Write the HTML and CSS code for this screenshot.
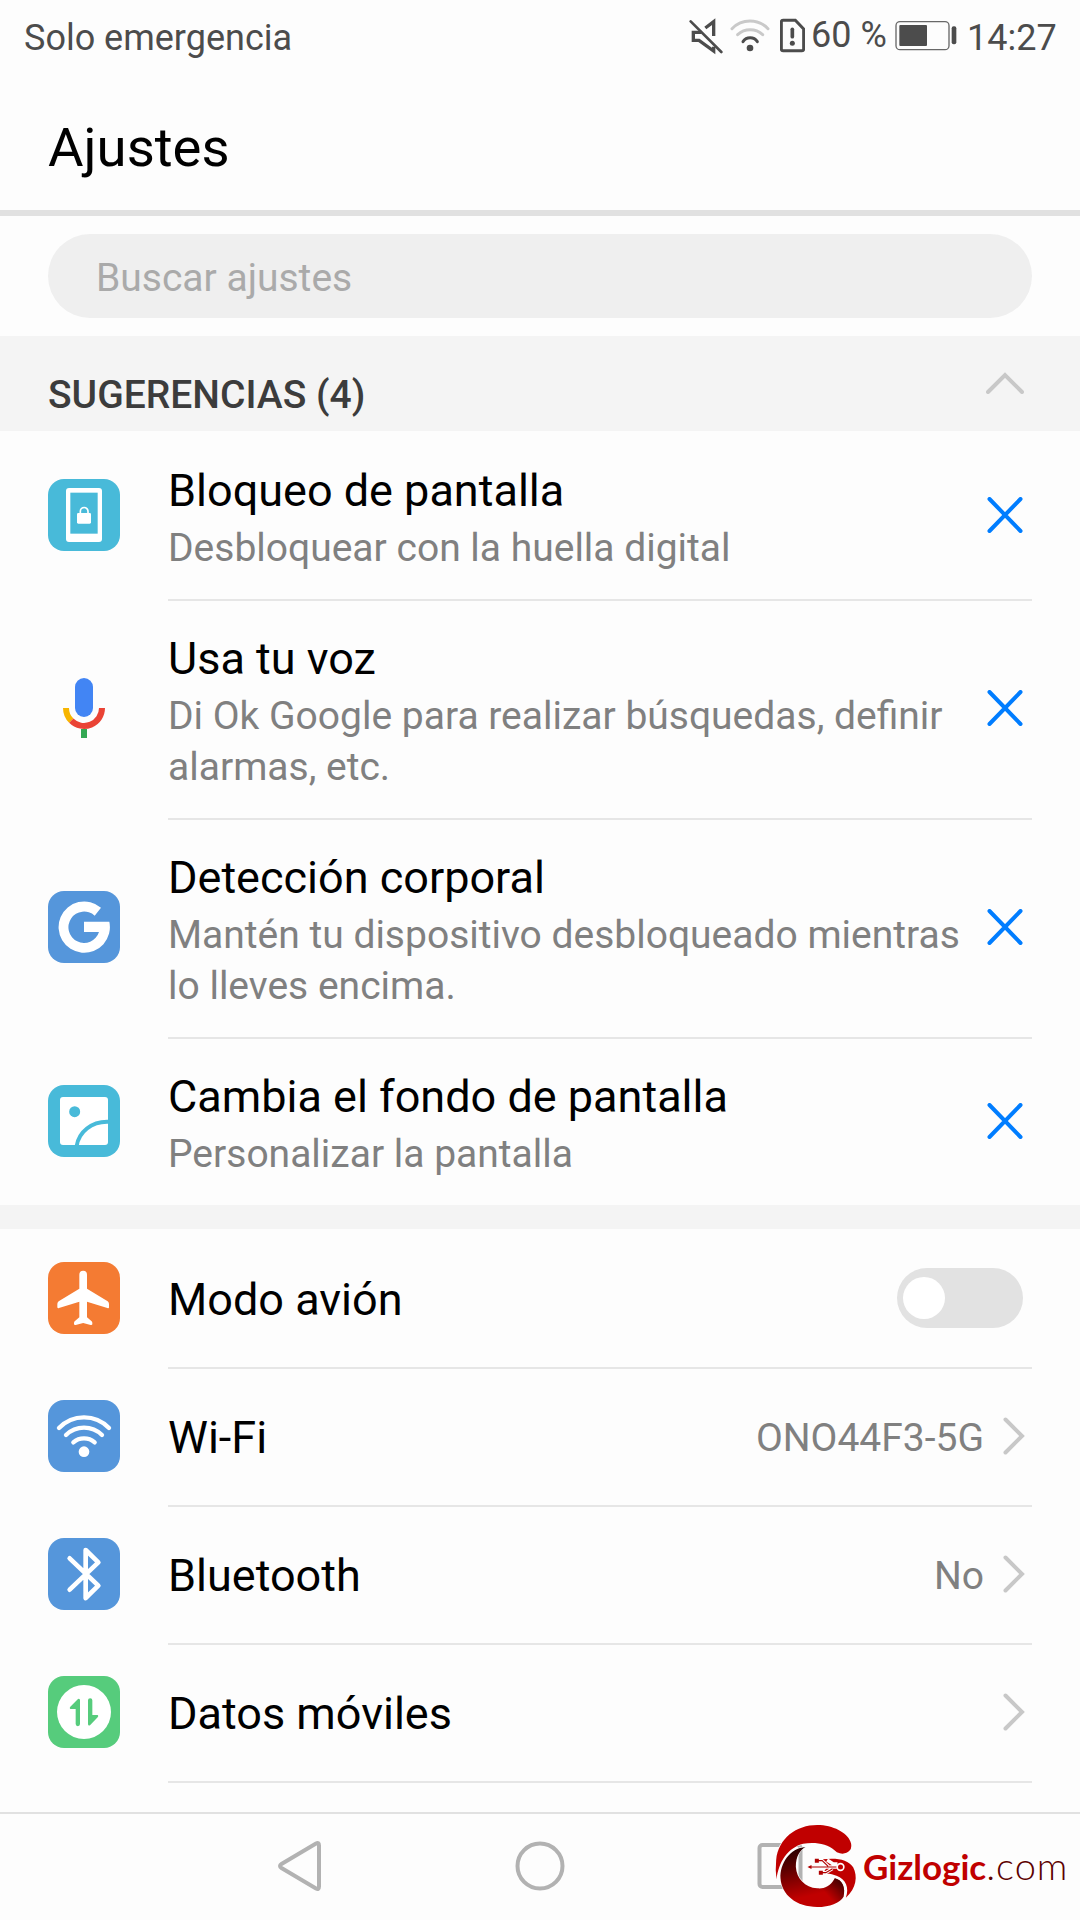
FILE: index.html
```
<!DOCTYPE html>
<html lang="es">
<head>
  <meta charset="UTF-8">
  <meta name="viewport" content="width=device-width, initial-scale=1.0">
  <title>Ajustes</title>
  <link rel="stylesheet" href="styles.css">
</head>
<body>
  <div class="status-bar">
    <span class="carrier">Solo emergencia</span>
    <svg class="status-mute" viewBox="87 48 102 120" fill="none" stroke="#4c4c4c" stroke-width="10">
      <path d="M136 84L161 65V108M124 97H100V121H117L161 153V140"/>
      <path d="M92 64L184 156" stroke-linecap="round" stroke-width="8"/>
    </svg>
    <svg class="status-wifi" viewBox="210 48 120 120" fill="none" stroke-width="9" stroke-linecap="round">
      <path d="M216 86A75 75 0 0 1 324 86M233 104A56 56 0 0 1 308 104" stroke="#c9c9c9"/>
      <path d="M249 125A26 26 0 0 1 292 125" stroke="#4c4c4c"/>
      <circle cx="270" cy="144" r="10" fill="#4c4c4c"/>
    </svg>
    <svg class="status-sim" viewBox="360 48 75 120" fill="none" stroke="#4c4c4c" stroke-width="9">
      <path d="M369 61H406L431 87V147Q431 152 426 152H369Q364 152 364 147V66Q364 61 369 61Z"/>
      <path d="M397 88V110" stroke-width="11" stroke-linecap="round"/>
      <circle cx="397" cy="130" r="7.5" fill="#4c4c4c" stroke="none"/>
    </svg>
    <span class="battery-level">60 %</span>
    <svg class="status-battery" viewBox="706 48 186 120">
      <rect x="709" y="65" width="159" height="84" rx="12" fill="none" stroke="#686868" stroke-width="4"/>
      <rect x="719" y="75" width="83" height="63" rx="3" fill="#4c4c4c"/>
      <rect x="876" y="79" width="14" height="54" rx="6" fill="#4c4c4c"/>
    </svg>
    <span class="clock">14:27</span>
  </div>

  <header class="header">
    <h1>Ajustes</h1>
  </header>

  <div class="search">
    <div class="search-field">Buscar ajustes</div>
  </div>

  <div class="section-title">
    <h2>SUGERENCIAS (4)</h2>
    <svg class="collapse" viewBox="0 0 38 22"><path d="M2 20L19 3L36 20"/></svg>
  </div>

  <div class="suggestions">
    <div class="row tip">
      <svg class="icon" viewBox="0 0 216 216">
        <rect width="216" height="216" rx="48" fill="#48bad9"/>
        <rect x="54" y="27" width="108" height="162" rx="9" fill="#fff"/>
        <rect x="67" y="41" width="82" height="123" fill="#48bad9"/>
        <rect x="87" y="102" width="42" height="32" rx="4" fill="#fff"/>
        <path d="M97 104V97a11.5 11.5 0 0 1 23 0v7" fill="none" stroke="#fff" stroke-width="5"/>
      </svg>
      <div class="text">
        <h3>Bloqueo de pantalla</h3>
        <p>Desbloquear con la huella digital</p>
      </div>
      <svg class="close" viewBox="0 0 36 36"><path d="M2.500 2L33.500 34M33.500 2L2.500 34"/></svg>
    </div>

    <div class="row tip tall">
      <svg class="icon" viewBox="0 0 216 216">
        <rect x="81" y="18" width="54" height="117" rx="27" fill="#4285f4"/>
        <path d="M54 108A54 54 0 0 0 69.800 146.200" fill="none" stroke="#f7b500" stroke-width="18"/>
        <path d="M69.800 146.200A54 54 0 0 0 162 108" fill="none" stroke="#ea4335" stroke-width="18"/>
        <rect x="99" y="171" width="18" height="27" fill="#34a853"/>
      </svg>
      <div class="text">
        <h3>Usa tu voz</h3>
        <p>Di Ok Google para realizar búsquedas, definir<br>alarmas, etc.</p>
      </div>
      <svg class="close" viewBox="0 0 36 36"><path d="M2.500 2L33.500 34M33.500 2L2.500 34"/></svg>
    </div>

    <div class="row tip tall">
      <svg class="icon" viewBox="0 0 216 216">
        <rect width="216" height="216" rx="48" fill="#5596db"/>
        <path d="M159 50A77 77 0 1 0 184 92H108V123H153A47 47 0 1 1 140 74Z" fill="#fff"/>
      </svg>
      <div class="text">
        <h3>Detección corporal</h3>
        <p>Mantén tu dispositivo desbloqueado mientras<br>lo lleves encima.</p>
      </div>
      <svg class="close" viewBox="0 0 36 36"><path d="M2.500 2L33.500 34M33.500 2L2.500 34"/></svg>
    </div>

    <div class="row tip">
      <svg class="icon" viewBox="0 0 216 216">
        <rect width="216" height="216" rx="48" fill="#48bad9"/>
        <rect x="36" y="36" width="144" height="144" rx="9" fill="#fff"/>
        <circle cx="80" cy="80" r="16.500" fill="#48bad9"/>
        <path d="M86 183C92 142 130 108 182 110" fill="none" stroke="#48bad9" stroke-width="12"/>
      </svg>
      <div class="text">
        <h3>Cambia el fondo de pantalla</h3>
        <p>Personalizar la pantalla</p>
      </div>
      <svg class="close" viewBox="0 0 36 36"><path d="M2.500 2L33.500 34M33.500 2L2.500 34"/></svg>
    </div>
  </div>

  <div class="divider"></div>

  <div class="settings">
    <div class="row">
      <svg class="icon" viewBox="0 0 216 216">
        <rect width="216" height="216" rx="48" fill="#f47b33"/>
        <path fill="#fff" d="M94 38a11.500 11.500 0 0 1 23 0V80L179 118Q183 121 183 126V136Q183 140 178 138L117 119V166L130 177Q133 179 133 183V187Q132 190 128 189L105.500 183L83 189Q79 190 78 187V183Q78 179 81 177L94 166V119L33 138Q29 140 28 136V126Q28 121 32 118L94 80Z"/>
      </svg>
      <h3 class="label">Modo avión</h3>
      <span class="toggle"><span class="knob"></span></span>
    </div>

    <div class="row">
      <svg class="icon" viewBox="0 0 216 216">
        <rect width="216" height="216" rx="48" fill="#5596db"/>
        <g fill="none" stroke="#fff" stroke-width="13" stroke-linecap="round">
          <path d="M33 84A104 104 0 0 1 183 84"/>
          <path d="M54 105A77 77 0 0 1 162 105"/>
          <path d="M76 127A49 49 0 0 1 140 127"/>
        </g>
        <circle cx="108" cy="155" r="16" fill="#fff"/>
      </svg>
      <h3 class="label">Wi-Fi</h3>
      <span class="value">ONO44F3-5G</span>
      <svg class="chevron" viewBox="0 0 22 38"><path d="M2.500 2.500L19 19L2.500 35.500"/></svg>
    </div>

    <div class="row">
      <svg class="icon" viewBox="0 0 216 216">
        <rect width="216" height="216" rx="48" fill="#5596db"/>
        <path d="M65 61L151 143L113 180V36L151 73L65 155" fill="none" stroke="#fff" stroke-width="14" stroke-linecap="round" stroke-linejoin="round"/>
      </svg>
      <h3 class="label">Bluetooth</h3>
      <span class="value">No</span>
      <svg class="chevron" viewBox="0 0 22 38"><path d="M2.500 2.500L19 19L2.500 35.500"/></svg>
    </div>

    <div class="row">
      <svg class="icon" viewBox="0 0 216 216">
        <rect width="216" height="216" rx="48" fill="#56cc7c"/>
        <circle cx="108" cy="108" r="81" fill="#fff"/>
        <path fill="#56cc7c" d="M83 144V99H67Q63 96 67 92L90 69Q96 67 96 73V144a6.500 6.500 0 0 1-13 0z"/>
        <path fill="#56cc7c" d="M133 73V117H149Q153 120 149 124L126 148Q120 150 120 144V73a6.500 6.500 0 0 1 13 0z"/>
      </svg>
      <h3 class="label">Datos móviles</h3>
      <svg class="chevron" viewBox="0 0 22 38"><path d="M2.500 2.500L19 19L2.500 35.500"/></svg>
    </div>

    <div class="row row-cut"></div>
  </div>

  <nav class="nav-bar">
    <svg viewBox="0 0 60 60"><path d="M46 7.500Q49 6 49 9.500V50.500Q49 54 46 52.500L11.500 32Q8.500 30 11.500 28Z"/></svg>
    <svg viewBox="0 0 60 60"><circle cx="30" cy="30" r="22.500"/></svg>
    <svg viewBox="0 0 60 60"><rect x="9.500" y="9" width="41" height="42" rx="3"/></svg>
    <div class="brand">
      <svg class="brand-mark" viewBox="100 66 260 264">
        <defs>
          <linearGradient id="swirl" x1="0.100" y1="0" x2="0.350" y2="1">
            <stop offset="0.050" stop-color="#2a0000"/>
            <stop offset="0.350" stop-color="#5c0000"/>
            <stop offset="0.850" stop-color="#c00000"/>
          </linearGradient>
          <linearGradient id="tail" x1="0" y1="1" x2="1" y2="0">
            <stop offset="0.350" stop-color="#300000" stop-opacity="0"/>
            <stop offset="1" stop-color="#300000"/>
          </linearGradient>
        </defs>
        <g stroke="#fdfdfd" stroke-width="4" paint-order="stroke">
          <path fill="#c00000" d="M110 238Q106 210 109 180C115 115 170 75 232 75C280 75 322 98 332 125Q338 140 330 151Q318 164 300 160Q290 158 284 151C262 130 225 126 190 131C145 142 116 185 110 238Z"/>
          <path fill="url(#swirl)" d="M197 141C150 145 120 190 122 235C125 285 170 321 232 321C270 321 300 308 311 290C318 264 308 240 285 235C270 262 250 267 232 265C195 262 170 235 168 200C168 170 180 150 197 141Z"/>
          <path fill="#c00000" d="M248 178C290 173 325 178 340 202C354 228 350 266 318 293C329 262 318 238 290 227C278 223 270 219 248 221L262 201Z"/>
        </g>
        <path fill="url(#tail)" d="M285 235C276 254 262 263 245 265L240 319C275 318 302 306 311 290C318 264 308 240 285 235Z"/>
        <g fill="none">
          <path d="M205 201H291M231 182H247L265 199M243 218H258L278 206M262 180L280 192H293" stroke="#fdfdfd" stroke-width="10"/>
          <path d="M208 201H291M231 182H247L265 199M243 218H258L278 206" stroke="#b00000" stroke-width="3.500"/>
          <circle cx="302" cy="201" r="10" fill="#c00000" stroke="#fdfdfd" stroke-width="5"/>
        </g>
        <path fill="#b00000" d="M203 201L215 195V207ZM225 176H237V188H225ZM237 212H249V224H237Z"/>
      </svg>
      <span class="brand-name">Gizlogic<span class="brand-tld">.com</span></span>
    </div>
  </nav>
</body>
</html>
```

FILE: styles.css
```
* {
  box-sizing: border-box;
}

body {
  margin: 0;
  width: 1080px;
  height: 1920px;
  display: flex;
  flex-direction: column;
  overflow: hidden;
  background-color: #fdfdfd;
  font-family: Roboto, "Liberation Sans", sans-serif;
  color: #000;
}

h1, h2, h3, p {
  margin: 0;
  font-weight: 400;
}

svg {
  display: block;
  flex-shrink: 0;
}

.status-bar {
  height: 72px;
  padding: 0 24px;
  display: flex;
  align-items: center;
  font-size: 36px;
  color: #4c4c4c;
}

.status-bar svg {
  height: 40px;
}

.carrier {
  flex: 1;
  padding-top: 4px;
}

.status-mute {
  width: 34px;
  margin-right: 7px;
}

.status-wifi {
  width: 40px;
  margin-right: 10px;
}

.status-sim {
  width: 25px;
  margin-right: 6px;
}

.battery-level {
  width: 84px;
  padding-bottom: 3px;
  white-space: nowrap;
}

.status-battery {
  width: 62px;
  margin-right: 10px;
}

.clock {
  width: 89px;
  padding-top: 4px;
}

.header {
  height: 144px;
  padding: 11px 48px 0;
  display: flex;
  align-items: center;
  border-bottom: 6px solid #e1e1e1;
}

.header h1 {
  font-size: 54.5px;
}

.search {
  height: 120px;
  padding: 18px 48px;
}

.search-field {
  height: 84px;
  padding: 4px 48px 0;
  border-radius: 42px;
  background-color: #efefef;
  color: #aaa;
  font-size: 39px;
  line-height: 81px;
}

.section-title {
  height: 95px;
  padding: 0 56px 0 48px;
  display: flex;
  justify-content: space-between;
  background-color: #f4f4f4;
}

.section-title h2 {
  padding-top: 35px;
  font-size: 39px;
  line-height: 48px;
  font-weight: 500;
  color: #3c3c3c;
}

.collapse {
  width: 38px;
  height: 22px;
  margin-top: 36px;
}

.collapse path,
.chevron path {
  fill: none;
  stroke: #c8c8c8;
  stroke-width: 4;
  stroke-linecap: round;
}

.row {
  height: 138px;
  padding: 0 55px 0 48px;
  display: flex;
  align-items: center;
  flex-shrink: 0;
}

/* separator starts at the text column */
.row + .row {
  background: linear-gradient(#e6e6e6, #e6e6e6) 168px 0 / 864px 2px no-repeat;
}

.tip {
  height: 168px;
  padding-right: 57px;
}

.tall {
  height: 219px;
  padding-bottom: 1px;
}

.row-cut {
  height: 31px;
}

.icon {
  width: 72px;
  height: 72px;
  margin-right: 48px;
}

.text {
  flex: 1;
  align-self: flex-start;
  padding-top: 33px;
  white-space: nowrap;
}

.row h3 {
  font-size: 45px;
  line-height: 53px;
}

.text p {
  margin-top: 6px;
  font-size: 39px;
  line-height: 51px;
  color: #808080;
}

.label {
  flex: 1;
  padding-top: 3px;
}

.close {
  width: 36px;
  height: 36px;
}

.close path {
  fill: none;
  stroke: #007dff;
  stroke-width: 4;
  stroke-linecap: round;
}

.value {
  margin-right: 19px;
  padding-top: 3px;
  font-size: 39px;
  color: #808080;
}

.chevron {
  width: 22px;
  height: 38px;
}

.toggle {
  width: 126px;
  height: 60px;
  padding: 9px 6px;
  margin-right: 2px;
  border-radius: 30px;
  background-color: #e2e2e2;
}

.knob {
  display: block;
  width: 42px;
  height: 42px;
  border-radius: 50%;
  background-color: #fff;
}

.divider {
  height: 24px;
  background-color: #f4f4f4;
}

.nav-bar {
  position: relative;
  height: 108px;
  padding-bottom: 2px;
  display: flex;
  justify-content: center;
  align-items: center;
  gap: 180px;
  border-top: 2px solid #e1e1e1;
}

.nav-bar > svg {
  width: 60px;
  height: 60px;
  fill: none;
  stroke: #b2b2b2;
  stroke-width: 4;
}

/* lies over the right end of the navigation bar */
.brand {
  position: absolute;
  top: 8px;
  left: 773px;
  display: flex;
  align-items: center;
}

.brand-mark {
  width: 87px;
  height: 88px;
}

.brand-name {
  margin-left: 3px;
  font-family: Lato, sans-serif;
  font-size: 35px;
  font-weight: 700;
  color: #c00000;
  white-space: nowrap;
}

.brand-tld {
  font-size: 38px;
  font-weight: 300;
  line-height: 1;
  letter-spacing: 1px;
  color: #5c0000;
}
```
